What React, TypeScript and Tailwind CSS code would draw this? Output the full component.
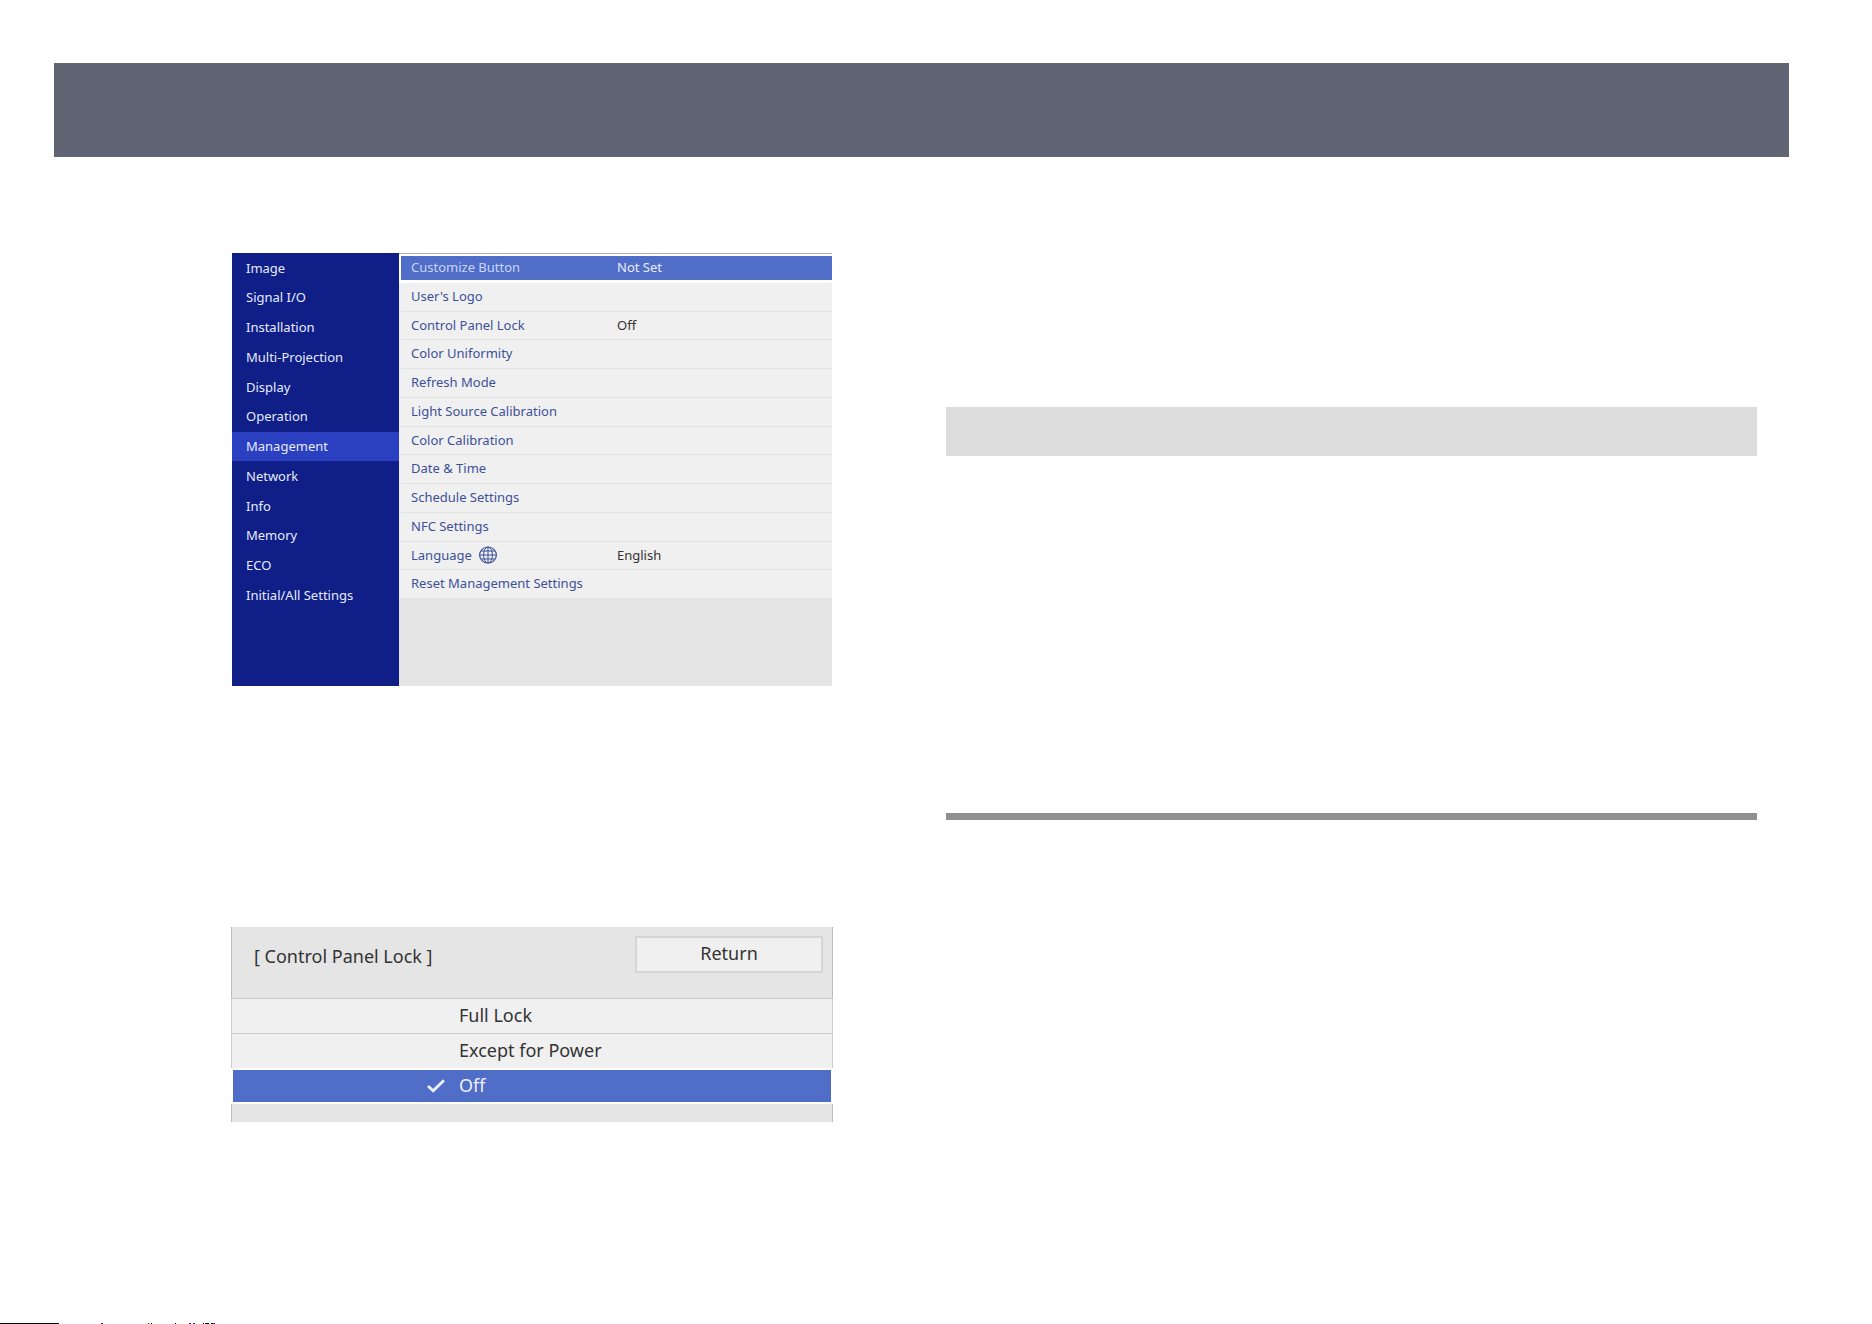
import { useState } from "react";
import clsx from "clsx";

interface Setting {
  label: string;
  value?: string;
  globe?: boolean;
}

const MENUS = [
  "Image",
  "Signal I/O",
  "Installation",
  "Multi-Projection",
  "Display",
  "Operation",
  "Management",
  "Network",
  "Info",
  "Memory",
  "ECO",
  "Initial/All Settings",
];

const SETTINGS: Setting[] = [
  { label: "Customize Button", value: "Not Set" },
  { label: "User's Logo" },
  { label: "Control Panel Lock", value: "Off" },
  { label: "Color Uniformity" },
  { label: "Refresh Mode" },
  { label: "Light Source Calibration" },
  { label: "Color Calibration" },
  { label: "Date & Time" },
  { label: "Schedule Settings" },
  { label: "NFC Settings" },
  { label: "Language", value: "English", globe: true },
  { label: "Reset Management Settings" },
];

const LOCK_OPTIONS = ["Full Lock", "Except for Power", "Off"];

function GlobeIcon() {
  return (
    <svg className="h-[18px] w-[18px]" viewBox="0 0 18 18" fill="none" stroke="currentColor" strokeWidth={1} aria-hidden="true">
      <ellipse cx="9" cy="9" rx="8.4" ry="8" strokeWidth={1.2} />
      <ellipse cx="9" cy="9" rx="4.4" ry="8" />
      <path d="M9 1v16M.5 9h17M2 5h14M2 13h14" />
    </svg>
  );
}

function CheckIcon() {
  return (
    <svg className="h-[14px] w-[18px]" viewBox="0 0 18 14" fill="none" stroke="currentColor" strokeWidth={2.8} aria-hidden="true">
      <path d="M1 7l5.2 4.8L17 1.2" />
    </svg>
  );
}

function MenuPanel() {
  const [menu, setMenu] = useState("Management");
  const [active, setActive] = useState("Customize Button");

  return (
    <section className="mx-px flex h-[433px] bg-[#e5e5e5] text-[13px]">
      <nav className="w-[167px] shrink-0 bg-[#0f1f87] text-[#e6eafb]">
        <ul className="grid h-[357px] grid-rows-12">
          {MENUS.map((name) => (
            <li key={name} className="flex">
              <button
                onClick={() => setMenu(name)}
                className={clsx("flex-1 pl-[14px] pt-px text-left whitespace-nowrap", menu === name && "bg-[#2a40c0]")}
              >
                {name}
              </button>
            </li>
          ))}
        </ul>
      </nav>

      <div className="min-w-0 flex-1 border-t border-[#b0b0b0]">
        <ul className="grid h-[345px] grid-rows-12 bg-[#f0f0f0]">
          {SETTINGS.map(({ label, value, globe }) => {
            const selected = active === label;
            return (
              <li key={label} className="flex">
                <button
                  onClick={() => setActive(label)}
                  className={clsx(
                    "flex flex-1 items-center border-l-2 pl-[10px] text-left whitespace-nowrap",
                    selected
                      ? "border-t-2 border-b-3 border-white bg-[#506dc8] text-[#c9d5f7]"
                      : "border-b border-b-[#e2e2e2] border-l-[#ececf2] text-[#3d5199]"
                  )}
                >
                  <span className="flex w-[206px] items-center gap-[7px]">
                    {label}
                    {globe && <GlobeIcon />}
                  </span>
                  <span className={selected ? "text-[#e8edfc]" : "text-[#333333]"}>{value}</span>
                </button>
              </li>
            );
          })}
        </ul>
      </div>
    </section>
  );
}

function LockPanel() {
  const [lock, setLock] = useState("Off");

  return (
    <section className="bg-[#e5e5e5] text-[18px] text-[#333333]">
      <div className="flex h-[71px] items-start justify-between border-x border-[#bdbdbd] pr-[9px] pl-[22px]">
        <h2 id="lock-title" className="mt-4">
          [ Control Panel Lock ]
        </h2>
        <button className="mt-[9px] h-[37px] w-[188px] border-2 border-[#d5d5d5] bg-[#f0f0f0] pb-[2px]">Return</button>
      </div>
      <div role="radiogroup" aria-labelledby="lock-title">
        {LOCK_OPTIONS.map((option) => {
          const checked = lock === option;
          return (
            <label
              key={option}
              className={clsx(
                "relative flex items-center pb-px",
                checked
                  ? "h-[36px] border-2 border-white bg-[#506dc8] pl-[194px] text-[#eef1fd]"
                  : "h-[35px] border-x border-t border-[#cccccc] bg-[#f0f0f0] pl-[195px]"
              )}
            >
              <input
                type="radio"
                name="lock"
                className="sr-only"
                checked={checked}
                onChange={() => setLock(option)}
              />
              <span className="flex w-[32px]">{checked && <CheckIcon />}</span>
              {option}
            </label>
          );
        })}
      </div>
      <div className="h-[18px] border-x border-[#bdbdbd]" />
    </section>
  );
}

// One pixel high row of marks along the page's bottom edge
function EdgeMarks() {
  return (
    <svg className="mt-auto h-px w-[260px]" viewBox="0 0 260 1" shapeRendering="crispEdges" aria-hidden="true">
      <path fill="#000" d="M0 0h58v1H0zM151 0h1v1h-1zM175 0h1v1h-1zM203 0h1v1h-1zM206 0h3v1h-3zM211 0h1v1h-1z" />
      <path fill="#0000c0" d="M58 0h1v1h-1zM102 0h1v1h-1zM190 0h1v1h-1zM194 0h1v1h-1zM212 0h1v1h-1zM214 0h1v1h-1z" />
      <path fill="#e02020" d="M101 0h1v1h-1zM148 0h1v1h-1zM189 0h1v1h-1zM193 0h1v1h-1zM205 0h1v1h-1zM213 0h1v1h-1z" />
      <path fill="#80e0c0" d="M149 0h1v1h-1zM209 0h1v1h-1z" />
    </svg>
  );
}

export default function App() {
  return (
    <div className="flex min-h-screen flex-col bg-white font-['Noto_Sans',sans-serif]">
      <header className="mt-[63px] mr-[83px] ml-[54px] h-[94px] bg-[#616573]" />
      <main className="mt-24 grid grid-cols-[602fr_811fr] gap-x-[113px] pr-[115px] pl-[231px]">
        <div className="flex flex-col gap-[241px]">
          <MenuPanel />
          <LockPanel />
        </div>
        <div className="pt-[154px]">
          <div className="h-[49px] bg-[#dcdcdc]" />
          <hr className="mt-[357px] h-[7px] border-0 bg-[#918f90]" />
        </div>
      </main>
      <EdgeMarks />
    </div>
  );
}
